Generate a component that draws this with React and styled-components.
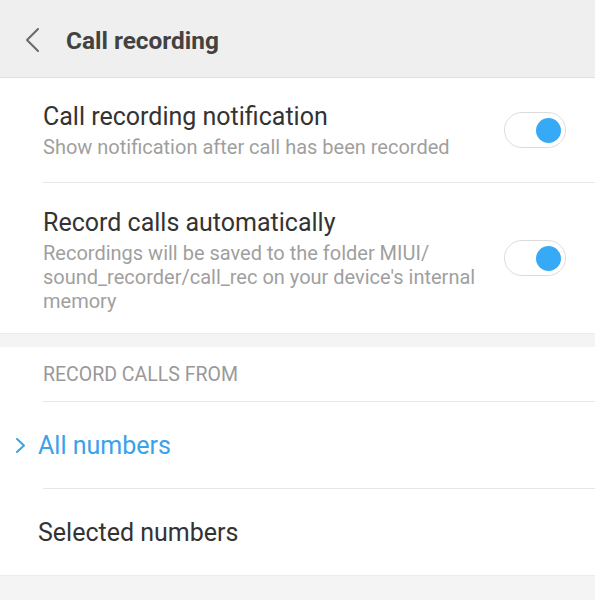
import React, { useState } from "react";
import styled, { createGlobalStyle } from "styled-components";

const GlobalStyle = createGlobalStyle`
  html, body {
    margin: 0;
    padding: 0;
    background: #f4f4f4;
  }
  body {
    font-family: Roboto, "Noto Sans", sans-serif;
    -webkit-font-smoothing: antialiased;
  }
`;

const Page = styled.div`
  width: 595px;
  min-height: 600px;
  background: #f4f4f4;
  display: flex;
  flex-direction: column;
`;

const TopBar = styled.header`
  height: 78px;
  box-sizing: border-box;
  padding: 4px 0 0 26px;
  background: #efefef;
  border-bottom: 1px solid #e0e0e0;
  display: flex;
  align-items: center;
  gap: 26px;
`;

const BackBtn = styled.button`
  border: 0;
  background: none;
  padding: 0;
  margin-top: -1px;
  width: 14px;
  height: 24px;
  display: flex;
  cursor: pointer;
`;

const Title = styled.h1`
  margin: 0;
  font-size: 24.4px;
  font-weight: 700;
  color: #424242;
`;

const Section = styled.section`
  background: #fff;
  margin-bottom: ${({ gap }) => gap || 0}px;
  border-bottom: 1px solid #ececec;
`;

const Row = styled.div`
  margin-left: 43px;
  padding: ${({ top }) => top}px 29px 0 0;
  height: ${({ h }) => h}px;
  box-sizing: border-box;
  display: flex;
  align-items: flex-start;
`;

const TextCol = styled.div`
  flex: 1;
  min-width: 0;
`;

const RowTitle = styled.div`
  font-size: 25px;
  line-height: 30px;
  color: #333;
`;

const RowSub = styled.div`
  font-size: 20px;
  line-height: 24px;
  color: #9f9f9f;
  margin-top: 3px;
  max-width: 450px;
`;

const Switch = styled.button`
  flex: none;
  align-self: center;
  width: 62px;
  height: 36px;
  border-radius: 18px;
  border: 1px solid #dcdcdc;
  background: #fff;
  padding: 0;
  position: relative;
  margin-top: -${({ shift }) => shift}px;
  cursor: pointer;
  &::after {
    content: "";
    position: absolute;
    top: 4.5px;
    left: ${({ on }) => (on ? "31px" : "4px")};
    width: 25px;
    height: 25px;
    border-radius: 50%;
    background: ${({ on }) => (on ? "#36a9f7" : "#ccc")};
  }
`;

const GroupLabel = styled.div`
  margin-left: 43px;
  height: 54px;
  display: flex;
  align-items: center;
  font-size: 19.5px;
  color: #999;
`;

const Option = styled.div`
  margin-left: 16px;
  height: 86px;
  display: flex;
  align-items: center;
  gap: 13px;
  font-size: 25px;
  color: ${({ active }) => (active ? "#3aa2ea" : "#333")};
  cursor: pointer;
  padding-left: ${({ active }) => (active ? 0 : "22px")};
`;

const Divider = styled.div`
  height: 1px;
  background: #e6e6e6;
  margin-left: 43px;
`;

function Chevron({ dir, color, w, h, stroke }) {
  const d = dir === "left" ? `M${w - 1} 1 L1 ${h / 2} L${w - 1} ${h - 1}` : `M1 1 L${w - 1} ${h / 2} L1 ${h - 1}`;
  return (
    <svg width={w} height={h} viewBox={`0 0 ${w} ${h}`} fill="none">
      <path d={d} stroke={color} strokeWidth={stroke} strokeLinecap="round" strokeLinejoin="round" />
    </svg>
  );
}

export default function App() {
  const [notify, setNotify] = useState(true);
  const [auto, setAuto] = useState(true);
  const [source, setSource] = useState("all");

  return (
    <Page>
      <GlobalStyle />
      <TopBar>
        <BackBtn>
          <Chevron dir="left" color="#6a6a6a" w={13} h={24} stroke={2} />
        </BackBtn>
        <Title>Call recording</Title>
      </TopBar>

      <Section gap={13}>
        <Row h={104} top={24}>
          <TextCol>
            <RowTitle>Call recording notification</RowTitle>
            <RowSub>Show notification after call has been recorded</RowSub>
          </TextCol>
          <Switch shift={24} on={notify} onClick={() => setNotify(!notify)} />
        </Row>
        <Divider />
        <Row h={150} top={25}>
          <TextCol>
            <RowTitle>Record calls automatically</RowTitle>
            <RowSub>Recordings will be saved to the folder MIUI/ sound_recorder/call_rec on your device's internal memory</RowSub>
          </TextCol>
          <Switch shift={25} on={auto} onClick={() => setAuto(!auto)} />
        </Row>
      </Section>

      <Section>
        <GroupLabel>RECORD CALLS FROM</GroupLabel>
        <Divider />
        <Option active={source === "all"} onClick={() => setSource("all")}>
          {source === "all" && <Chevron dir="right" color="#3aa2ea" w={9} h={15} stroke={2} />}
          All numbers
        </Option>
        <Divider />
        <Option active={source === "selected"} onClick={() => setSource("selected")}>
          {source === "selected" && <Chevron dir="right" color="#3aa2ea" w={9} h={15} stroke={2} />}
          Selected numbers
        </Option>
      </Section>
    </Page>
  );
}
